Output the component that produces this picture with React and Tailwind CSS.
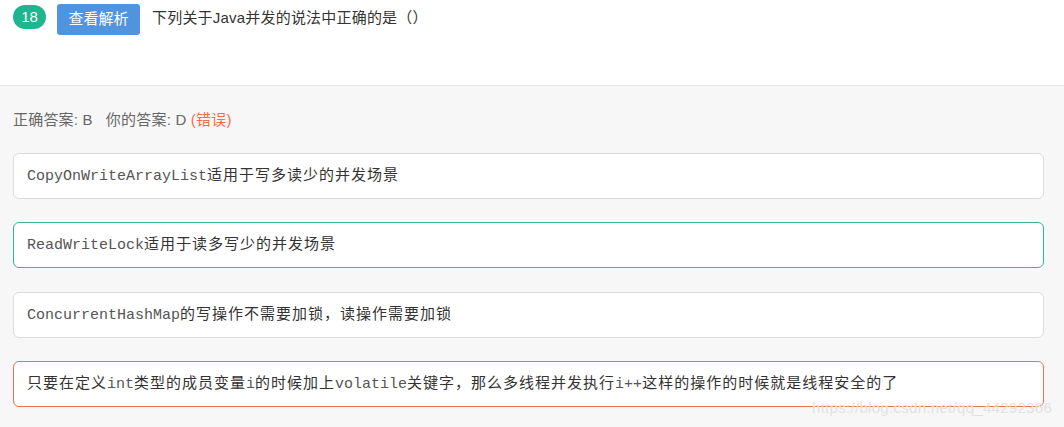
import React from "react";

const cjk = "font-['Liberation_Sans','Noto_Sans_CJK_SC',sans-serif]";
const mono = "font-['Liberation_Mono','Noto_Sans_CJK_SC',monospace] text-[15px] text-[#555] tracking-[0px]";

function Code({ children }) {
    return <span className={mono}>{children}</span>;
}

function Option({ border, children }) {
    return (
        <div
            className={`h-[46px] bg-white border rounded-[6px] pl-[13px] flex items-center text-[15px] text-[#333] tracking-[1px] ${border}`}
        >
            <div>{children}</div>
        </div>
    );
}

export default function App() {
    return (
        <div className={`w-[1064px] h-[427px] bg-[#f7f7f7] overflow-hidden relative ${cjk}`}>
            <div className="h-[86px] bg-white border-b border-[#e6e6e6] px-[13px] pt-[4px] flex items-start gap-[11px]">
                <div className="mt-[1px] w-[33px] h-[24px] rounded-full bg-[#1fb58f] text-white text-[15px] flex items-center justify-center">
                    18
                </div>
                <button className="w-[83px] h-[31px] rounded-[3px] bg-[#5094e0] text-white text-[15px] flex items-center justify-center">
                    查看解析
                </button>
                <div className="text-[15px] text-[#333] leading-[28px] ml-[1px] tracking-[0.2px]">
                    下列关于Java并发的说法中正确的是（）
                </div>
            </div>

            <div className="px-[13px] pt-[24px] text-[15px] text-[#666] leading-[20px] tracking-[0.2px]">
                正确答案: B&nbsp;&nbsp;&nbsp;你的答案: D <span className="text-[#f56c4a]">(错误)</span>
            </div>

            <div className="px-[13px] pt-[23px] flex flex-col gap-[23.4px] pr-[20px]">
                <Option border="border-[#dcdcdc]">
                    <Code>CopyOnWriteArrayList</Code>适用于写多读少的并发场景
                </Option>
                <Option border="border-[#2eb896]">
                    <Code>ReadWriteLock</Code>适用于读多写少的并发场景
                </Option>
                <Option border="border-[#dcdcdc]">
                    <Code>ConcurrentHashMap</Code>的写操作不需要加锁，读操作需要加锁
                </Option>
                <Option border="border-[#f0714f]">
                    只要在定义<Code>int</Code>类型的成员变量<Code>i</Code>的时候加上<Code>volatile</Code>关键字，那么多线程并发执行<Code>i++</Code>这样的操作的时候就是线程安全的了
                </Option>
            </div>

            <div className="absolute left-[812px] top-[397px] text-[15px] text-[#e2e2e2] font-['Liberation_Sans',sans-serif] tracking-[0.3px]">
                https://blog.csdn.net/qq_44292366
            </div>
        </div>
    );
}
